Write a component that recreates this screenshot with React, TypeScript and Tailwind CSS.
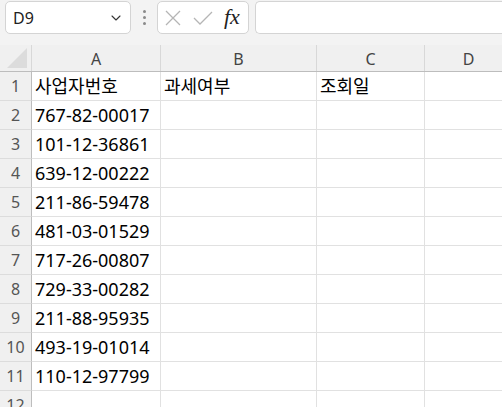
import { ChevronDown } from "lucide-react";

const rows: [string, string, string][] = [
  ["사업자번호", "과세여부", "조회일"],
  ["767-82-00017", "", ""],
  ["101-12-36861", "", ""],
  ["639-12-00222", "", ""],
  ["211-86-59478", "", ""],
  ["481-03-01529", "", ""],
  ["717-26-00807", "", ""],
  ["729-33-00282", "", ""],
  ["211-88-95935", "", ""],
  ["493-19-01014", "", ""],
  ["110-12-97799", "", ""],
  ["", "", ""],
];

const font = { fontFamily: '"Noto Sans", "Noto Sans CJK KR", sans-serif' };

function Toolbar() {
  return (
    <div className="flex h-[45px] items-start bg-[#f3f3f3] pl-[5px] pt-[1px]">
      <div className="flex h-[33px] w-[126px] shrink-0 items-center justify-between rounded-[5px] border border-[#d4d4d4] bg-white pl-[7px] pr-[6px]">
        <span className="text-[16px] leading-none text-[#222]">D9</span>
        <ChevronDown size={16} strokeWidth={1.6} className="text-[#333]" />
      </div>
      <div className="flex h-[33px] w-[26px] shrink-0 flex-col items-center justify-center gap-[3px]">
        <span className="h-[3px] w-[3px] rounded-full bg-[#8a8a8a]" />
        <span className="h-[3px] w-[3px] rounded-full bg-[#8a8a8a]" />
        <span className="h-[3px] w-[3px] rounded-full bg-[#8a8a8a]" />
      </div>
      <div className="flex h-[33px] w-[92px] shrink-0 items-center gap-[11px] rounded-[5px] border border-[#d4d4d4] bg-white pl-[6px]">
        <svg width="18" height="18" viewBox="0 0 18 18" fill="none" stroke="#b5b5b5" strokeWidth="1.3">
          <path d="M2 2 L16 16 M16 2 L2 16" />
        </svg>
        <svg width="20" height="18" viewBox="0 0 20 18" fill="none" stroke="#b5b5b5" strokeWidth="1.3">
          <path d="M1 9 L7 15 L19 3" />
        </svg>
        <span
          className="pb-[2px] text-[22px] italic leading-none text-[#222]"
          style={{ fontFamily: '"Liberation Serif", serif' }}
        >
          fx
        </span>
      </div>
      <div className="ml-[6px] h-[33px] flex-1 rounded-l-[5px] border border-r-0 border-[#d4d4d4] bg-white" />
    </div>
  );
}

function HeaderRow() {
  const cols = ["A", "B", "C", "D"];
  return (
    <div className="grid h-[27px] grid-cols-[32px_129px_156px_108px_88px] border-b border-[#bdbdbd] bg-[#f0f0f0]">
      <div className="relative border-r border-[#d8d8d8]">
        <svg className="absolute left-[7px] top-[3px]" width="20" height="20" viewBox="0 0 20 20">
          <path d="M20 0 L20 20 L0 20 Z" fill="#dcdcdc" />
        </svg>
      </div>
      {cols.map((c) => (
        <div
          key={c}
          className="flex items-center justify-center border-r border-[#d8d8d8] pt-[2px] text-[16px] leading-none text-[#444]"
        >
          {c}
        </div>
      ))}
    </div>
  );
}

export default function App() {
  return (
    <div className="h-[407px] w-[502px] overflow-hidden bg-white" style={font}>
      <Toolbar />
      <div className="w-[513px]">
        <HeaderRow />
        <div className="grid grid-cols-[32px_129px_156px_108px_88px]">
          {rows.map((r, i) => (
            <div key={i} className="contents">
              <div className="flex h-[29px] items-center justify-center border-b border-r border-b-[#dcdcdc] border-r-[#bdbdbd] bg-[#f0f0f0] text-[16px] leading-none text-[#555]">
                {i + 1}
              </div>
              {[...r, ""].map((v, j) => (
                <div
                  key={j}
                  className="flex h-[29px] items-center whitespace-nowrap border-b border-r border-[#e1e1e1] pl-[3px] text-[18px] leading-none text-black"
                >
                  {v}
                </div>
              ))}
            </div>
          ))}
        </div>
      </div>
    </div>
  );
}
